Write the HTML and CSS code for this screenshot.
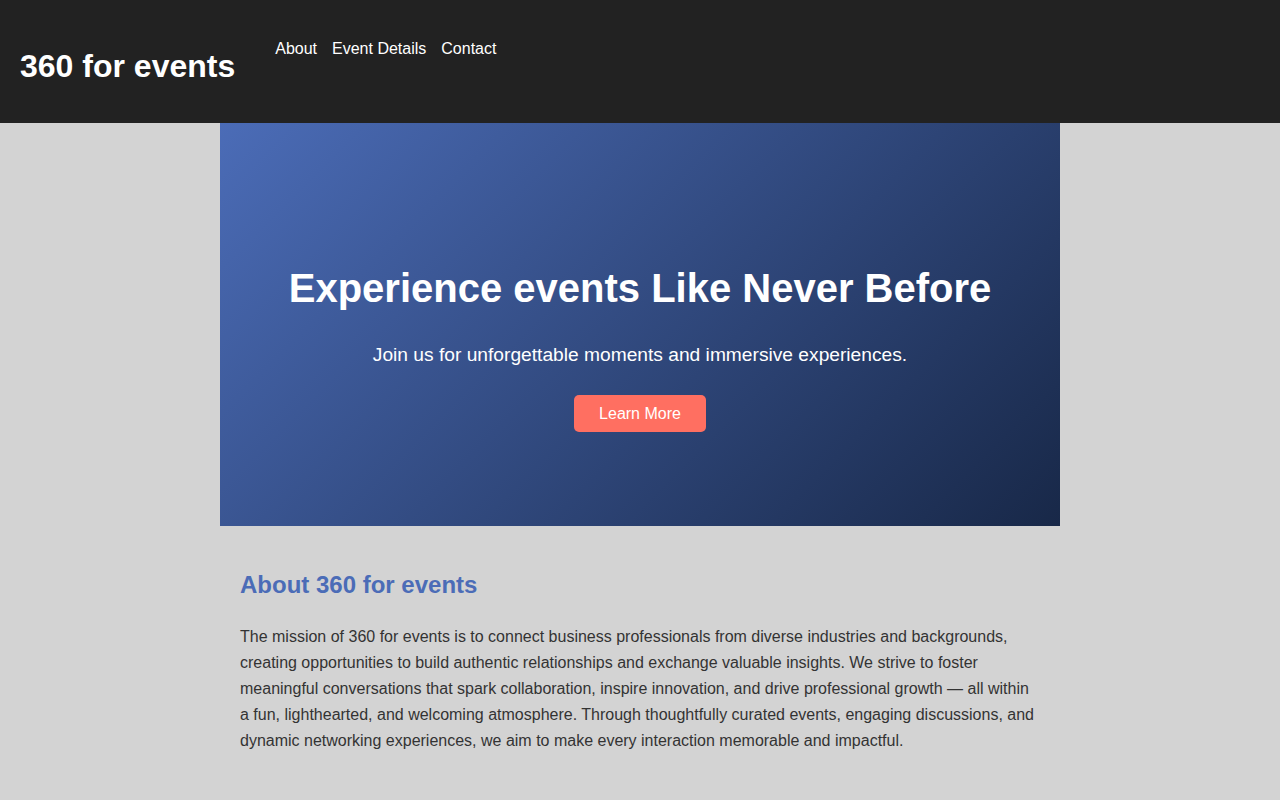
FILE: index.html
```html
<!DOCTYPE html>
<html lang="en">
<head>
<meta charset="utf-8">
<title>360 for events</title>
<link rel="stylesheet" href="styles.css">
</head>
<body>
<header class="site-header">
  <h1 class="logo">360 for events</h1>
  <nav class="nav">
    <ul class="nav-list">
      <li><a href="#about">About</a></li>
      <li><a href="#details">Event Details</a></li>
      <li><a href="#contact">Contact</a></li>
    </ul>
  </nav>
</header>
<main class="container">
  <section class="hero">
    <h2 class="hero-title">Experience events Like Never Before</h2>
    <p class="hero-sub">Join us for unforgettable moments and immersive experiences.</p>
    <a class="btn" href="#about">Learn More</a>
  </section>
  <section class="about" id="about">
    <h2 class="about-title">About 360 for events</h2>
    <p class="about-text">The mission of 360 for events is to connect business professionals from diverse industries and backgrounds, creating opportunities to build authentic relationships and exchange valuable insights. We strive to foster meaningful conversations that spark collaboration, inspire innovation, and drive professional growth — all within a fun, lighthearted, and welcoming atmosphere. Through thoughtfully curated events, engaging discussions, and dynamic networking experiences, we aim to make every interaction memorable and impactful.</p>
  </section>
</main>
</body>
</html>
```

FILE: styles.css
```css
* { box-sizing: border-box; }
html, body { margin: 0; padding: 0; }
body {
  background: #d3d3d3;
  font-family: "Liberation Sans", Arial, sans-serif;
  color: #333;
}
.site-header {
  background: #222;
  color: #fff;
  height: 123px;
  padding: 0 20px;
  display: flex;
  align-items: flex-start;
  gap: 40px;
}
.logo {
  margin: 48px 0 0;
  font-size: 32px;
  line-height: 37px;
  font-weight: bold;
}
.nav-list {
  list-style: none;
  margin: 40px 0 0;
  padding: 0;
  display: flex;
  gap: 15px;
}
.nav-list a {
  color: #fff;
  text-decoration: none;
  font-size: 16px;
  line-height: 18px;
}
.container {
  width: 840px;
  margin: 0 auto;
}
.hero {
  height: 403px;
  background: linear-gradient(135deg, #4b6cb7, #182848);
  color: #fff;
  display: flex;
  flex-direction: column;
  align-items: center;
  justify-content: center;
  text-align: center;
  padding-top: 48px;
}
.hero-title {
  margin: 0;
  font-size: 40px;
  line-height: 46px;
  font-weight: bold;
}
.hero-sub {
  margin: 33px 0 0;
  font-size: 19.2px;
  line-height: 22px;
}
.btn {
  margin-top: 29px;
  display: inline-block;
  background: #ff6f61;
  color: #fff;
  text-decoration: none;
  font-size: 16px;
  line-height: 18px;
  padding: 10px 25px 9px;
  border-radius: 5px;
}
.about {
  padding: 45px 20px 20px;
}
.about-title {
  margin: 0;
  color: #4b6cb7;
  font-size: 24px;
  line-height: 28px;
  font-weight: bold;
}
.about-text {
  margin: 25px 0 0;
  font-size: 16px;
  line-height: 26px;
}
```
